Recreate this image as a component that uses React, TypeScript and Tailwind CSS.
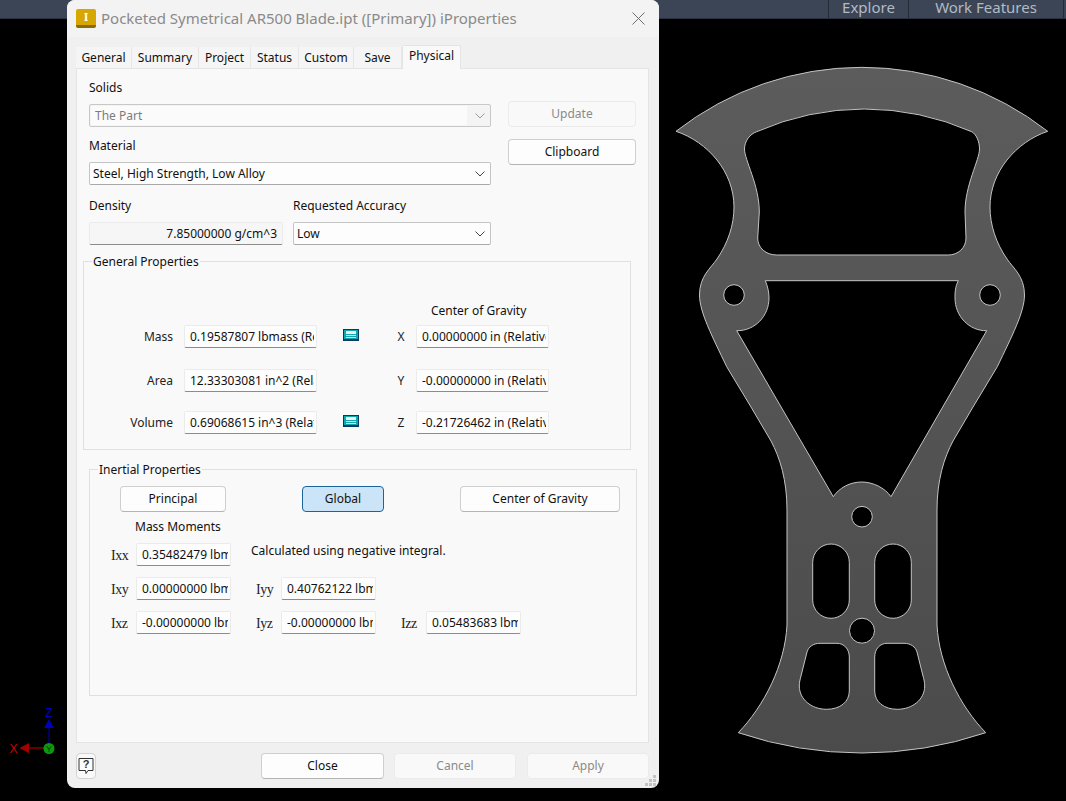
import type { ReactNode } from "react";

const outline =
  "M676 131.3 A302 302 0 0 1 1047.7 131.3 C1016 142 990 172 990 207 C990 225 996 243 1007 259 C1013 268 1024.5 276 1024.5 295 C1024.5 312 1012 336 997.3 366.7 L973 407 L953 441 C944 458 937 480 937 510 L937 625 C939 665 960 706 985.7 732.7 A387 387 0 0 1 738.3 732.7 C764 706 785 665 787 625 L787 510 C787 480 780 458 771 441 L751 407 L726.7 366.7 C712 336 699.5 312 699.5 295 C699.5 276 711 268 717 259 C728 243 734 225 734 207 C734 172 708 142 676 131.3 Z";

const holes = [
  // big top window
  "M756.7 131.7 A266 266 0 0 1 971.7 131.7 C976 134 979.5 141 979.5 149 C979.5 160 965 185 965 212 L966 238 C966 248 958 255 948.3 255 L776.7 255 C766 255 757.7 248 757.7 238 L759.3 212 C759.3 185 744.5 160 744.5 149 C744.5 141 750 134 756.7 131.7 Z",
  // triangle window
  "M765.3 280.7 L958.3 280.7 C955 287 955 293 955 298 C955 316 969 331 986.7 330.7 L891 496.7 C885 488 873 482 861.7 482 C850 482 839 488 833.3 496.7 L736.7 330.7 C755 331 769 316 769 298 C769 293 768 287 765.3 280.7 Z",
  // lower pockets
  "M820 643.3 L837 643.3 C844 643.3 849.3 649 849.3 657 L849.3 691 C849.3 702 840 709.3 826.7 709.3 C811 709.3 799.3 699 799.3 686 C799.3 682 800 680 801 676 L807 652 C808.5 647 813 643.3 820 643.3 Z",
  "M904 643.3 L887 643.3 C880 643.3 874.7 649 874.7 657 L874.7 691 C874.7 702 884 709.3 897.3 709.3 C913 709.3 924.7 699 924.7 686 C924.7 682 924 680 923 676 L917 652 C915.5 647 911 643.3 904 643.3 Z",
];

function Blade() {
  return (
    <svg className="absolute left-[660px] top-0" width="406" height="801" viewBox="660 0 406 801">
      <defs>
        <linearGradient id="steel" x1="0" y1="0" x2="0" y2="1">
          <stop offset="0" stopColor="#5c5c5c" />
          <stop offset="1" stopColor="#4b4b4b" />
        </linearGradient>
      </defs>
      <path
        fillRule="evenodd"
        fill="url(#steel)"
        stroke="#c4c4c4"
        strokeWidth="1"
        d={outline + " " + holes.join(" ")}
      />
      <g fill="#000" stroke="#c4c4c4" strokeWidth="1">
        <circle cx="734" cy="295" r="10.3" />
        <circle cx="990" cy="295" r="10.3" />
        <circle cx="862" cy="516.7" r="10.3" />
        <circle cx="862" cy="630.7" r="12.5" />
        <rect x="812.7" y="544" width="36.6" height="74.3" rx="18.3" />
        <rect x="874.7" y="544" width="36.6" height="74.3" rx="18.3" />
      </g>
    </svg>
  );
}

function Triad() {
  return (
    <svg className="absolute left-0 top-[700px]" width="66" height="64" viewBox="0 700 66 64">
      <line x1="49" y1="728" x2="49" y2="743" stroke="#0000b4" />
      <polygon points="49,719 44,728 54,728" fill="#0000b4" />
      <text x="49" y="717" textAnchor="middle" fontSize="12" fontFamily="Liberation Sans" fill="#0000c0">
        Z
      </text>
      <line x1="29" y1="748" x2="44" y2="748" stroke="#c00000" />
      <polygon points="19.5,748 29,743 29,753" fill="#a00000" />
      <text x="13.5" y="752.5" textAnchor="middle" fontSize="12" fontFamily="Liberation Sans" fill="#d00000">
        X
      </text>
      <circle cx="49" cy="748.5" r="5.5" fill="#0c9a0c" />
      <text x="49" y="752" textAnchor="middle" fontSize="9" fontFamily="Liberation Sans" fill="#053f05">
        Y
      </text>
    </svg>
  );
}

function Chevron({ muted }: { muted?: boolean }) {
  return (
    <svg width="10" height="6" viewBox="0 0 10 6" fill="none" stroke={muted ? "#9a9a9a" : "#444"} strokeWidth="1">
      <path d="M0.5 0.5 L5 5 L9.5 0.5" />
    </svg>
  );
}

function CalcIcon() {
  return (
    <svg width="16" height="12" viewBox="0 0 16 12">
      <rect x="0" y="0" width="16" height="12" fill="#033a66" />
      <rect x="1" y="1" width="14" height="10" fill="#12a6ad" />
      <rect x="3" y="2" width="10" height="3" fill="#e6f4f4" />
      <rect x="3" y="6" width="10" height="1" fill="#dfe8e8" />
      <rect x="3" y="8" width="10" height="1" fill="#dfe8e8" />
      <rect x="1" y="10" width="14" height="1" fill="#063f5c" />
    </svg>
  );
}

function Select({ value, disabled, className }: { value: string; disabled?: boolean; className: string }) {
  return (
    <div
      className={
        "h-[23px] flex items-center justify-between border rounded-[2px] pr-[5px] " +
        (disabled
          ? "bg-[#f4f4f4] border-[#c8c8c8] text-[#7b7b7b] "
          : "bg-[#fdfdfd] border-[#c4c4c4] border-b-[#a8a8a8] text-[#111] pl-[3px] ") +
        className
      }
    >
      {disabled ? (
        <div className="ml-[1px] w-[376px] h-[19px] bg-[#fbfbfb] pl-[4px] leading-[19px]">{value}</div>
      ) : (
        <span>{value}</span>
      )}
      <Chevron muted={disabled} />
    </div>
  );
}

function Field({ value, className = "" }: { value: string; className?: string }) {
  return (
    <div
      className={
        "h-[23px] shrink-0 pl-[5px] pr-[2px] flex items-center bg-[#fdfdfd] border border-[#ebebeb] border-b-[#8c8c8c] rounded-[2px] text-[#111] " +
        className
      }
    >
      <div className="w-full overflow-hidden whitespace-nowrap">{value}</div>
    </div>
  );
}

function Btn({
  children,
  className = "",
  variant = "normal",
}: {
  children: ReactNode;
  className?: string;
  variant?: "normal" | "off" | "on";
}) {
  const look = {
    normal: "bg-[#fdfdfd] border-[#cfcfcf] border-b-[#b4b4b4] text-[#111]",
    off: "bg-[#f9f9f9] border-[#ebebeb] text-[#8a8a8a]",
    on: "bg-[#cce4f7] border-[#1c659c] text-[#111]",
  }[variant];
  return (
    <div className={"h-[26px] shrink-0 flex items-center justify-center border rounded-[4px] " + look + " " + className}>
      {children}
    </div>
  );
}

function Group({ title, className, children }: { title: string; className: string; children: ReactNode }) {
  return (
    <div className={"relative border border-[#e0e0e0] " + className}>
      <span className="absolute -top-[10px] left-[8px] bg-[#f9f9f9] px-[1px] text-[#111] leading-[20px]">{title}</span>
      {children}
    </div>
  );
}

function GeneralRow({
  label,
  value,
  axis,
  axisValue,
  calc,
  className = "",
}: {
  label: string;
  value: string;
  axis: string;
  axisValue: string;
  calc?: boolean;
  className?: string;
}) {
  return (
    <div className={"flex items-center " + className}>
      <div className="w-[89px] text-right mr-[11px] text-[#222]">{label}</div>
      <Field value={value} className="w-[133px]" />
      <div className="w-[16px] ml-[26px] -mt-[3px] h-[12px] flex">{calc && <CalcIcon />}</div>
      <div className="w-[18px] ml-[33px] mr-[6px] mt-[1px] text-center text-[#222]">{axis}</div>
      <Field value={axisValue} className="w-[133px]" />
    </div>
  );
}

function Moment({ label, value, className = "" }: { label: string; value: string; className?: string }) {
  return (
    <div className={"flex items-center " + className}>
      <span className="w-[25px] font-['Liberation_Serif',serif] text-[14px] text-[#222] tracking-[-0.5px] mt-[2px]">{label}</span>
      <Field value={value} className="w-[95px]" />
    </div>
  );
}

export default function App() {
  return (
    <div className="relative w-screen h-screen overflow-hidden bg-black font-['Noto_Sans',sans-serif] text-[12px]">
      {/* ribbon behind the dialog */}
      <div className="h-[19px] flex justify-end bg-[#3b4556] border-b border-b-[#2a3240] text-[15px] leading-[15px] text-[#b2bac4]">
        <div className="w-[80px] border-l border-[#252c38] text-center">Explore</div>
        <div className="w-[156px] border-l border-r border-[#252c38] text-center">Work Features</div>
        <div className="w-[2px]" />
      </div>

      <Blade />
      <Triad />

      <div className="absolute left-[67px] top-0 w-[592px] h-[788px] flex flex-col rounded-[8px] bg-[#f0f0f0] overflow-hidden">
        {/* title bar */}
        <div className="h-[37px] shrink-0 flex items-center pl-[9px] pr-[14px] bg-[#f3f3f3]">
          <div className="w-[20px] h-[19px] rounded-[2px] bg-[#d8a600] border-b-[3px] border-[#8c6c00] flex items-center justify-center font-['Liberation_Serif',serif] font-bold text-[12px] leading-none text-white">
            I
          </div>
          <span className="ml-[5px] text-[15px] text-[#8a8a8a] whitespace-nowrap">
            Pocketed Symetrical AR500 Blade.ipt ([Primary]) iProperties
          </span>
          <svg className="ml-auto" width="13" height="13" viewBox="0 0 13 13" stroke="#6e6e6e" strokeWidth="1" fill="none">
            <path d="M0.5 0.5 L12.5 12.5 M12.5 0.5 L0.5 12.5" />
          </svg>
        </div>

        {/* tabs */}
        <div className="h-[31px] shrink-0 pl-[9px] flex items-end text-[#111]">
          {[
            ["General", "w-[56px]"],
            ["Summary", "w-[67px]"],
            ["Project", "w-[52px]"],
            ["Status", "w-[48px]"],
            ["Custom", "w-[55px]"],
            ["Save", "w-[48px]"],
          ].map(([name, w]) => (
            <div key={name} className={"h-[21px] flex items-center justify-center bg-[#f5f5f5] border-r border-[#e6e6e6] " + w}>
              {name}
            </div>
          ))}
          <div className="relative w-[59px] h-[24px] -mb-[1px] pb-[3px] flex items-center justify-center bg-[#f9f9f9] border border-b-0 border-[#e4e4e4] rounded-t-[2px]">
            Physical
          </div>
        </div>

        {/* physical page */}
        <div className="ml-[9px] w-[573px] h-[675px] shrink-0 border border-[#e4e4e4] bg-[#f9f9f9] text-[#111]">
          <div className="ml-[12px] pt-[9px] flex">
            <div className="w-[402px]">
              <div className="h-[20px] leading-[20px]">Solids</div>
              <Select value="The Part" disabled className="mt-[6px]" />
              <div className="h-[20px] mt-[9px] leading-[20px]">Material</div>
              <Select value="Steel, High Strength, Low Alloy" className="mt-[6px]" />
              <div className="mt-[11px] flex gap-[10px]">
                <div className="w-[194px]">
                  <div className="h-[20px] leading-[20px]">Density</div>
                  <div className="mt-[6px] h-[23px] px-[5px] flex items-center justify-end bg-[#f6f6f6] border border-[#ebebeb] border-b-[#8c8c8c] rounded-[2px]">
                    7.85000000 g/cm^3
                  </div>
                </div>
                <div className="w-[198px]">
                  <div className="h-[20px] leading-[20px]">Requested Accuracy</div>
                  <Select value="Low" className="mt-[6px]" />
                </div>
              </div>
            </div>
            <div className="ml-[17px] w-[128px] pt-[23px]">
              <Btn variant="off">Update</Btn>
              <Btn className="mt-[12px]">Clipboard</Btn>
            </div>
          </div>

          <Group title="General Properties" className="ml-[6px] mt-[16px] w-[548px] h-[189px] pt-[39px]">
            <div className="h-[20px] leading-[20px] ml-[347px]">Center of Gravity</div>
            <GeneralRow
              className="mt-[4px]"
              label="Mass"
              value="0.19587807 lbmass (Relative Error = 0.000000%)"
              axis="X"
              axisValue="0.00000000 in (Relative Error = 0.000000%)"
              calc
            />
            <GeneralRow
              className="mt-[21px]"
              label="Area"
              value="12.33303081 in^2 (Relative Error = 0.000000%)"
              axis="Y"
              axisValue="-0.00000000 in (Relative Error = 0.000000%)"
            />
            <GeneralRow
              className="mt-[19px]"
              label="Volume"
              value="0.69068615 in^3 (Relative Error = 0.000000%)"
              axis="Z"
              axisValue="-0.21726462 in (Relative Error = 0.000000%)"
              calc
            />
          </Group>

          <Group title="Inertial Properties" className="ml-[12px] mt-[19px] w-[548px] h-[227px] pt-[16px]">
            <div className="flex ml-[30px]">
              <Btn className="w-[106px]">Principal</Btn>
              <Btn variant="on" className="w-[82px] ml-[76px]">
                Global
              </Btn>
              <Btn className="w-[160px] ml-[76px]">Center of Gravity</Btn>
            </div>
            <div className="h-[20px] mt-[5px] ml-[45px] leading-[20px]">Mass Moments</div>
            <div className="mt-[6px] ml-[21px] flex flex-col gap-[11px]">
              <div className="flex">
                <Moment label="Ixx" value="0.35482479 lbmass in^2" />
                <span className="ml-[20px] -mt-[1px]">Calculated using negative integral.</span>
              </div>
              <div className="flex gap-[25px]">
                <Moment label="Ixy" value="0.00000000 lbmass in^2" />
                <Moment label="Iyy" value="0.40762122 lbmass in^2" />
              </div>
              <div className="flex gap-[25px]">
                <Moment label="Ixz" value="-0.00000000 lbmass in^2" />
                <Moment label="Iyz" value="-0.00000000 lbmass in^2" />
                <Moment label="Izz" value="0.05483683 lbmass in^2" />
              </div>
            </div>
          </Group>
        </div>

        {/* footer */}
        <div className="flex pl-[9px] pt-[10px]">
          <div className="w-[20px] h-[26px] flex items-center justify-center rounded-[4px] border border-[#d4d4d4] bg-[#f9f9f9]">
            <svg width="16" height="17" viewBox="0 0 16 17" fill="none" stroke="#333" strokeWidth="1">
              <path d="M1 0.5 H15 V12.5 H10 L8 15.5 L7.5 12.5 H1 Z" fill="#fcfcfc" />
              <text x="8" y="10" textAnchor="middle" fontSize="11" fontWeight="bold" fontFamily="Liberation Sans" fill="#333" stroke="none">
                ?
              </text>
            </svg>
          </div>
          <Btn className="w-[123px] ml-[165px]">Close</Btn>
          <Btn variant="off" className="w-[122px] ml-[10px]">
            Cancel
          </Btn>
          <Btn variant="off" className="w-[122px] ml-[11px]">
            Apply
          </Btn>
        </div>

        {/* resize grip */}
        <svg className="absolute right-[3px] bottom-[2px]" width="11" height="11" viewBox="0 0 11 11" fill="#c4c4c4">
          <rect x="8" y="0" width="3" height="3" />
          <rect x="4" y="4" width="3" height="3" />
          <rect x="8" y="4" width="3" height="3" />
          <rect x="0" y="8" width="3" height="3" />
          <rect x="4" y="8" width="3" height="3" />
          <rect x="8" y="8" width="3" height="3" />
        </svg>
      </div>
    </div>
  );
}
